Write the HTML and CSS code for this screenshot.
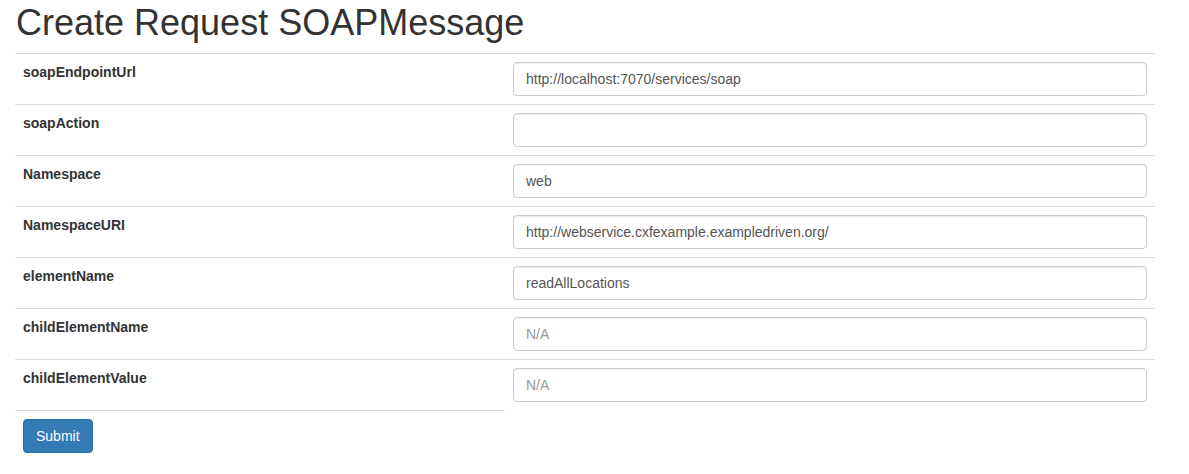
FILE: index.html
```html
<!DOCTYPE html>
<html>
<head>
<meta charset="utf-8">
<link rel="stylesheet" href="styles.css">
</head>
<body>
<div class="container">
  <h1 class="title">Create Request SOAPMessage</h1>
  <form>
    <table class="form-table">
      <colgroup><col class="col-label"><col class="col-field"></colgroup>
      <tr><th>soapEndpointUrl</th><td><input class="form-control" type="text" value="http://localhost:7070/services/soap"></td></tr>
      <tr><th>soapAction</th><td><input class="form-control" type="text" value=""></td></tr>
      <tr><th>Namespace</th><td><input class="form-control" type="text" value="web"></td></tr>
      <tr><th>NamespaceURI</th><td><input class="form-control" type="text" value="http://webservice.cxfexample.exampledriven.org/"></td></tr>
      <tr><th>elementName</th><td><input class="form-control" type="text" value="readAllLocations"></td></tr>
      <tr><th>childElementName</th><td><input class="form-control" type="text" placeholder="N/A"></td></tr>
      <tr><th>childElementValue</th><td><input class="form-control" type="text" placeholder="N/A"></td></tr>
      <tr><td class="submit-cell"><button type="button" class="btn">Submit</button></td></tr>
    </table>
  </form>
</div>
</body>
</html>
```
FILE: styles.css
```css
* { box-sizing: border-box; }
html, body { margin: 0; padding: 0; background: #fff; }
body {
  font-family: "Liberation Sans", Arial, Helvetica, sans-serif;
  font-size: 14px;
  line-height: 20px;
  color: #333;
}
.container { padding: 0 15px; }
.title {
  font-size: 36px;
  font-weight: 500;
  line-height: 1.1;
  margin: 3px 0 10px 1px;
  color: #333;
}
.form-table {
  width: 1140px;
  border-collapse: separate;
  border-spacing: 0;
  table-layout: fixed;
}
.col-label { width: 490px; }
.col-field { width: 650px; }
.form-table th, .form-table td {
  padding: 8px;
  border-top: 1px solid #ddd;
  vertical-align: top;
  text-align: left;
  line-height: 20px;
}
.form-table th { font-weight: bold; }
.form-control {
  display: block;
  width: 100%;
  height: 34px;
  padding: 6px 12px;
  font-family: inherit;
  font-size: 14px;
  line-height: 20px;
  color: #555;
  background: #fff;
  border: 1px solid #ccc;
  border-radius: 4px;
  box-shadow: inset 0 1px 1px rgba(0,0,0,0.075);
  margin: 0;
}
.form-control::placeholder { color: #999; opacity: 1; }
.btn {
  display: inline-block;
  vertical-align: top;
  height: 34px;
  padding: 6px 12px;
  font-family: inherit;
  font-size: 14px;
  line-height: 20px;
  color: #fff;
  background: #337ab7;
  border: 1px solid #2e6da4;
  border-radius: 4px;
  margin: 0;
  cursor: pointer;
}
```
